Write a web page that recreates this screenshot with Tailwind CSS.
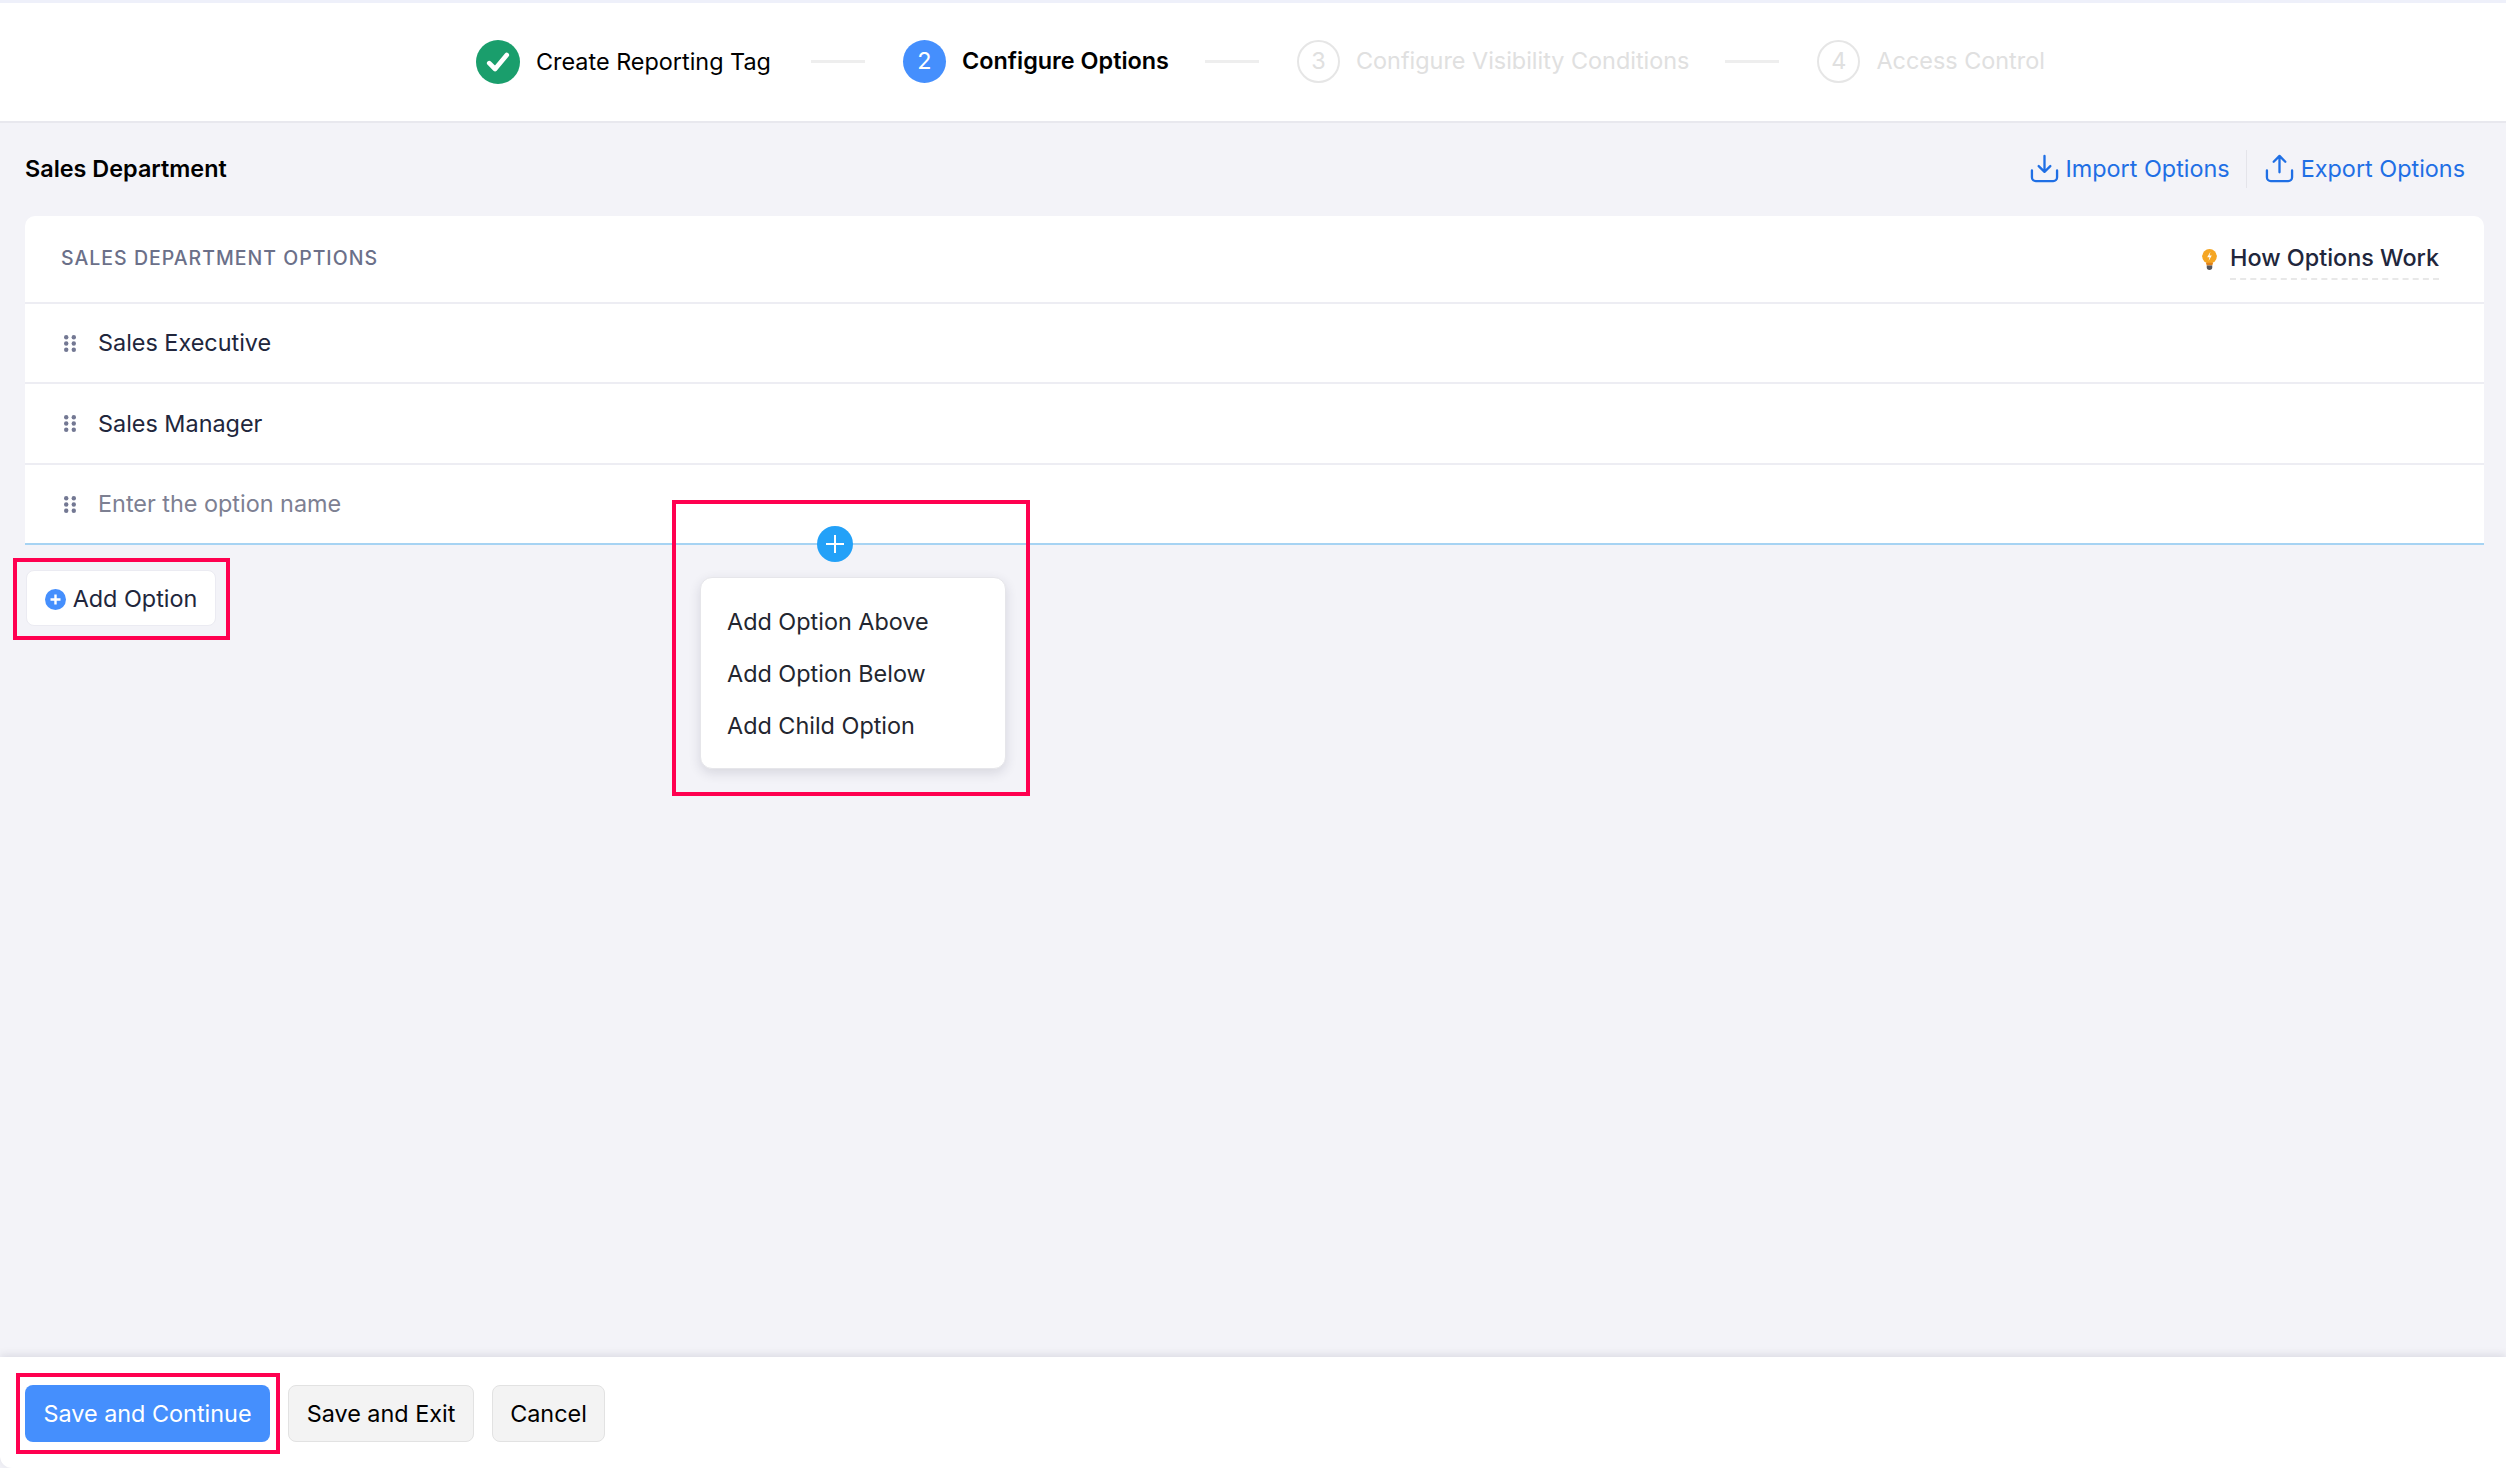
<!DOCTYPE html>
<html lang="en">
<head>
    <meta charset="UTF-8">
    <title>Configure Options</title>
    <script src="https://cdn.jsdelivr.net/npm/@tailwindcss/browser@4"></script>
</head>
<body class="bg-[#f3f3f8] font-['Inter',sans-serif] text-[23.4px] text-[#21263c]">
<div class="relative h-[1468px] w-[2506px] overflow-hidden flex flex-col">
    <!-- Stepper -->
    <header class="h-[123px] shrink-0 bg-white border-t-[3px] border-t-[#eef0fa] border-b-2 border-b-[#e8e8ee] flex items-center pl-[476px] pb-[2px]">
        <div class="flex items-center gap-[16px] text-black">
            <span class="w-[44px] h-[44px] rounded-full bg-[#1a9e6c] flex items-center justify-center mt-[2px]">
                <svg class="w-[28px] h-[28px]" viewBox="0 0 24 24" fill="none" stroke="white" stroke-width="4" stroke-linecap="round" stroke-linejoin="round"><path d="M4.5 13l5 5L19.5 6"/></svg>
            </span>
            <span class="mt-[2px] w-[239px]">Create Reporting Tag</span>
        </div>
        <span class="w-[54px] h-[3px] bg-[#eeeeee] ml-[36px]"></span>
        <div class="flex items-center gap-[16px] ml-[38px] text-black font-semibold">
            <span class="w-[43px] h-[43px] rounded-full bg-[#458ffd] text-white font-normal flex items-center justify-center">2</span>
            <span>Configure Options</span>
        </div>
        <span class="w-[54px] h-[3px] bg-[#eeeeee] ml-[36px]"></span>
        <div class="flex items-center gap-[16px] ml-[38px] text-[#e0e0e0]">
            <span class="w-[43px] h-[43px] rounded-full border-2 border-[#e6e6e6] flex items-center justify-center">3</span>
            <span>Configure Visibility Conditions</span>
        </div>
        <span class="w-[54px] h-[3px] bg-[#eeeeee] ml-[36px]"></span>
        <div class="flex items-center gap-[16px] ml-[38px] text-[#e0e0e0]">
            <span class="w-[43px] h-[43px] rounded-full border-2 border-[#e6e6e6] flex items-center justify-center">4</span>
            <span>Access Control</span>
        </div>
    </header>

    <main class="flex-1 pl-[25px] pr-[22px]">
        <div class="h-[93px] pb-[2px] flex items-center justify-between">
            <h1 class="font-semibold text-black">Sales Department</h1>
            <div class="flex items-center text-[#1f6fe5] pr-[19px]">
                <a class="flex items-center gap-[6px]">
                    <svg class="w-[29px] h-[29px]" viewBox="0 0 30 30" fill="none" stroke="currentColor" stroke-width="2.4" stroke-linecap="round" stroke-linejoin="round"><path d="M15 2v16M9 12.5l6 6 6-6M2 17v7a4 4 0 0 0 4 4h18a4 4 0 0 0 4-4v-7"/></svg>
                    <span>Import Options</span>
                </a>
                <span class="w-[1px] h-[38px] bg-[#e4e4ea] ml-[16px] mr-[18px]"></span>
                <a class="flex items-center gap-[7px]">
                    <svg class="w-[29px] h-[29px]" viewBox="0 0 30 30" fill="none" stroke="currentColor" stroke-width="2.4" stroke-linecap="round" stroke-linejoin="round"><path d="M15 19V2M9 8l6-6 6 6M2 17v7a4 4 0 0 0 4 4h18a4 4 0 0 0 4-4v-7"/></svg>
                    <span>Export Options</span>
                </a>
            </div>
        </div>

        <!-- Options card -->
        <section class="bg-white rounded-t-[10px]">
            <div class="h-[88px] border-b-2 border-[#ededf3] flex items-center justify-between pl-[36px] pr-[45px]">
                <span class="text-[19.5px] font-medium tracking-[1px] uppercase text-[#6b7089]">Sales Department Options</span>
                <div class="flex items-center gap-[12px]">
                    <svg class="w-[17px] h-[22px] mt-[2px]" viewBox="0 0 18 24"><circle cx="9" cy="8" r="8" fill="#f5a623"/><path d="M5 15h8l-1 3H6z" fill="#e0831a"/><path d="M6 18h6v2a3 3 0 0 1-6 0z" fill="#55565c"/><path d="M10 3L6.5 9H9l-1 4 3.5-6H9z" fill="#fff"/></svg>
                    <span class="font-medium border-b-2 border-dashed border-[#e8e8e8] pb-[3px] mt-[2px]">How Options Work</span>
                </div>
            </div>
            <div class="h-[80px] border-b-2 border-[#ededf3] flex items-center pl-[39px] gap-[22px]">
                <svg class="w-[12px] h-[17px] shrink-0" viewBox="0 0 12 17" fill="#737893"><circle cx="2.2" cy="2.2" r="2.2"/><circle cx="9.8" cy="2.2" r="2.2"/><circle cx="2.2" cy="8.5" r="2.2"/><circle cx="9.8" cy="8.5" r="2.2"/><circle cx="2.2" cy="14.8" r="2.2"/><circle cx="9.8" cy="14.8" r="2.2"/></svg>
                <span>Sales Executive</span>
            </div>
            <div class="h-[81px] border-b-2 border-[#ededf3] flex items-center pl-[39px] gap-[22px]">
                <svg class="w-[12px] h-[17px] shrink-0" viewBox="0 0 12 17" fill="#737893"><circle cx="2.2" cy="2.2" r="2.2"/><circle cx="9.8" cy="2.2" r="2.2"/><circle cx="2.2" cy="8.5" r="2.2"/><circle cx="9.8" cy="8.5" r="2.2"/><circle cx="2.2" cy="14.8" r="2.2"/><circle cx="9.8" cy="14.8" r="2.2"/></svg>
                <span>Sales Manager</span>
            </div>
            <div class="h-[80px] border-b-2 border-[#a6d3f3] flex items-center pl-[39px] gap-[22px]">
                <svg class="w-[12px] h-[17px] shrink-0" viewBox="0 0 12 17" fill="#737893"><circle cx="2.2" cy="2.2" r="2.2"/><circle cx="9.8" cy="2.2" r="2.2"/><circle cx="2.2" cy="8.5" r="2.2"/><circle cx="9.8" cy="8.5" r="2.2"/><circle cx="2.2" cy="14.8" r="2.2"/><circle cx="9.8" cy="14.8" r="2.2"/></svg>
                <span class="text-[#7d8092]">Enter the option name</span>
            </div>
        </section>

        <button class="mt-[25px] ml-[1px] h-[56px] w-[190px] pt-[2px] bg-white rounded-[8px] border border-[#ebebf2] flex items-center justify-center gap-[7px]">
            <svg class="w-[21px] h-[21px]" viewBox="0 0 21 21"><circle cx="10.5" cy="10.5" r="10.5" fill="#458ffd"/><path d="M10.5 5.5v10M5.5 10.5h10" stroke="#fff" stroke-width="2.4"/></svg>
            <span>Add Option</span>
        </button>
    </main>

    <!-- Footer -->
    <footer class="h-[111px] shrink-0 bg-white rounded-bl-[12px] shadow-[0_-2px_8px_rgba(40,40,70,0.12)] flex items-center gap-[18px] pl-[25px] pt-[2px]">
        <button class="h-[57px] w-[245px] rounded-[8px] bg-[#458ffd] text-white">Save and Continue</button>
        <button class="h-[57px] w-[186px] rounded-[8px] bg-[#f3f3f3] border border-[#e2e2e2] text-black">Save and Exit</button>
        <button class="h-[57px] w-[113px] rounded-[8px] bg-[#f3f3f3] border border-[#e2e2e2] text-black">Cancel</button>
    </footer>

    <!-- Add-option popup -->
    <span class="absolute left-[817px] top-[526px] w-[36px] h-[36px] rounded-full bg-[#23a1f8] flex items-center justify-center">
        <svg class="w-[20px] h-[20px]" viewBox="0 0 20 20"><path d="M10 1v18M1 10h18" stroke="#fff" stroke-width="2"/></svg>
    </span>
    <div class="absolute left-[700px] top-[577px] w-[306px] h-[192px] pt-[1px] bg-white rounded-[12px] border border-[#e6e6ea] shadow-[0_4px_12px_rgba(40,40,70,0.14)] flex flex-col justify-center gap-[16px] pl-[26px] text-[#23262f]">
        <span class="leading-[36px]">Add Option Above</span>
        <span class="leading-[36px]">Add Option Below</span>
        <span class="leading-[36px]">Add Child Option</span>
    </div>

    <!-- Red annotation boxes -->
    <div class="absolute left-[13px] top-[558px] w-[217px] h-[82px] border-[4px] border-[#ff0050]"></div>
    <div class="absolute left-[672px] top-[500px] w-[358px] h-[296px] border-[4px] border-[#ff0050]"></div>
    <div class="absolute left-[16px] top-[1373px] w-[264px] h-[81px] border-[4px] border-[#ff0050]"></div>
</div>
</body>
</html>
